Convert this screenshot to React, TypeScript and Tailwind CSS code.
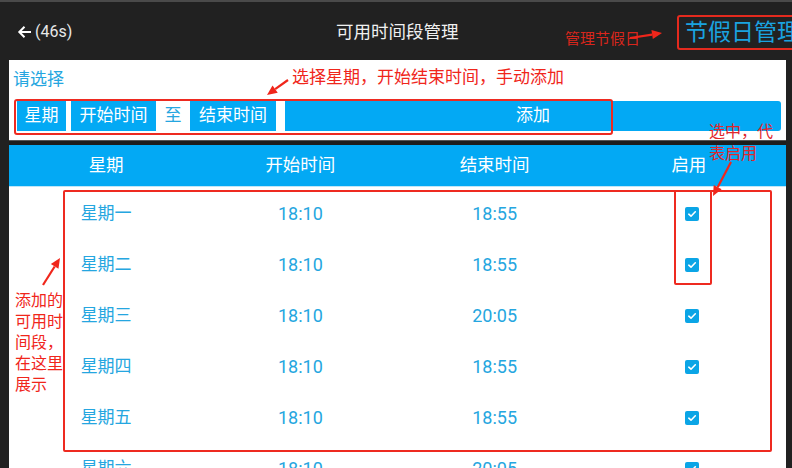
import React from "react";

const rows = [
  { d: "星期一", s: "18:10", e: "18:55" },
  { d: "星期二", s: "18:10", e: "18:55" },
  { d: "星期三", s: "18:10", e: "20:05" },
  { d: "星期四", s: "18:10", e: "18:55" },
  { d: "星期五", s: "18:10", e: "18:55" },
  { d: "星期六", s: "18:10", e: "20:05" },
];

function Check() {
  return (
    <div className="w-[14px] h-[14px] rounded-[2px] bg-[#0ba5e6] flex items-center justify-center">
      <svg width="10" height="10" viewBox="0 0 10 10">
        <path d="M1.8 5.2 L4 7.2 L8.3 2.8" fill="none" stroke="#fff" strokeWidth="1.6" strokeLinecap="round" strokeLinejoin="round" />
      </svg>
    </div>
  );
}

function Arrow({ x1, y1, x2, y2 }: { x1: number; y1: number; x2: number; y2: number }) {
  const dx = x2 - x1;
  const dy = y2 - y1;
  const len = Math.sqrt(dx * dx + dy * dy);
  const ux = dx / len;
  const uy = dy / len;
  const hl = 10;
  const hw = 4.5;
  const bx = x2 - ux * hl;
  const by = y2 - uy * hl;
  const px = -uy;
  const py = ux;
  return (
    <g>
      <line x1={x1} y1={y1} x2={bx} y2={by} stroke="#f0261b" strokeWidth="2.2" />
      <polygon
        points={`${x2},${y2} ${bx + px * hw},${by + py * hw} ${bx - px * hw},${by - py * hw}`}
        fill="#f0261b"
      />
    </g>
  );
}

export default function App() {
  return (
    <div
      className="relative w-[792px] h-[468px] overflow-hidden bg-[#212121] border-t-[2px] border-[#4a4a4a]"
      style={{ fontFamily: "Roboto, 'Noto Sans CJK SC', sans-serif" }}
    >
      {/* top bar */}
      <div className="h-[58px] flex items-center whitespace-nowrap">
        <div className="w-[336px] shrink-0 flex items-center pl-[17px] pt-[2px] text-white">
          <svg width="16" height="16" viewBox="0 0 16 16" className="mr-[2px]">
            <path d="M14 8 H2.5 M7.5 2.8 L2.3 8 L7.5 13.2" fill="none" stroke="#fff" strokeWidth="2" />
          </svg>
          <span className="text-[16px] text-[#e8e8e8]">(46s)</span>
        </div>
        <div className="w-[124px] shrink-0 text-[17.5px] pt-[2px] text-[#f0f0f0]">可用时间段管理</div>
        <div className="ml-[217px] shrink-0 pt-[2px]">
          <div className="text-[23px] leading-[29px] text-[#1aa3e0] pl-[6px] pr-[4px] py-[1px] border-[2px] border-[#e52a1e] rounded-[3px]">
            节假日管理
          </div>
        </div>
      </div>

      {/* content */}
      <div className="ml-[9px] mr-[6px]">
        {/* select panel */}
        <div className="bg-white h-[80px] px-[4px] pt-[8px]">
          <div className="text-[17px] leading-[22px] text-[#25a6e0]">请选择</div>
          <div className="mt-[11px] flex items-stretch h-[30px] text-[17px] text-white">
            <div className="w-[49px] ml-[4px] bg-[#03a9f4] flex items-center justify-center">星期</div>
            <div className="w-[85px] ml-[5px] bg-[#03a9f4] flex items-center justify-center">开始时间</div>
            <div className="w-[34px] flex items-center justify-center text-[#25a6e0]">至</div>
            <div className="w-[86px] bg-[#03a9f4] flex items-center justify-center">结束时间</div>
            <div className="flex-1 ml-[9px] mr-[1px] bg-[#03a9f4] rounded-r-[3px] flex items-center justify-center">添加</div>
          </div>
        </div>
        {/* separator */}
        <div className="h-[5px] border-t border-[#555] bg-[#1d1d1d]" />
        {/* header */}
        <div className="h-[42px] bg-[#03a9f4] grid grid-cols-4 items-center text-center text-[17.5px] text-white border-b border-[#bfe6f8]">
          <div>星期</div>
          <div>开始时间</div>
          <div>结束时间</div>
          <div>启用</div>
        </div>
        {/* rows */}
        <div className="bg-white pt-[1px]">
          {rows.map((r) => (
            <div key={r.d} className="h-[51px] grid grid-cols-4 items-center text-center text-[#25a6e0]">
              <div className="text-[17px]">{r.d}</div>
              <div className="text-[18px]">{r.s}</div>
              <div className="text-[18px]">{r.e}</div>
              <div className="flex justify-center pl-[6px]">
                <Check />
              </div>
            </div>
          ))}
        </div>
      </div>

      {/* annotations */}
      <div className="absolute left-[565px] top-[27px] text-[15px] leading-[20px] text-[#d8261c] whitespace-nowrap">管理节假日</div>
      <div className="absolute left-[292px] top-[64px] text-[17px] leading-[22px] text-[#f0261b] whitespace-nowrap">
        选择星期，开始结束时间，手动添加
      </div>
      <div className="absolute left-[709px] top-[119px] text-[16px] leading-[22px] text-[#e0262b] w-[70px]">
        选中，代
        <br />
        表启用
      </div>
      <div className="absolute left-[15px] top-[288px] text-[16px] leading-[21px] text-[#f0261b] w-[50px]">
        添加的
        <br />
        可用时
        <br />
        间段，
        <br />
        在这里
        <br />
        展示
      </div>

      {/* red boxes */}
      <div className="absolute left-[14px] top-[97px] w-[599px] h-[36px] border-[2px] border-[#ee2a20] rounded-[3px]" />
      <div className="absolute left-[63px] top-[188px] w-[709px] h-[262px] border-[2px] border-[#ee2a20] rounded-[2px]" />
      <div className="absolute left-[674px] top-[188px] w-[38px] h-[95px] border-[2px] border-[#ee2a20] rounded-[2px]" />

      <svg className="absolute left-0 top-0 pointer-events-none" width="792" height="468">
        <Arrow x1={288} y1={78} x2={267} y2={93} />
        <Arrow x1={630} y1={36} x2={662} y2={31} />
        <Arrow x1={731} y1={160} x2={713} y2={194} />
        <Arrow x1={43} y1={283} x2={60} y2={256} />
      </svg>
    </div>
  );
}
